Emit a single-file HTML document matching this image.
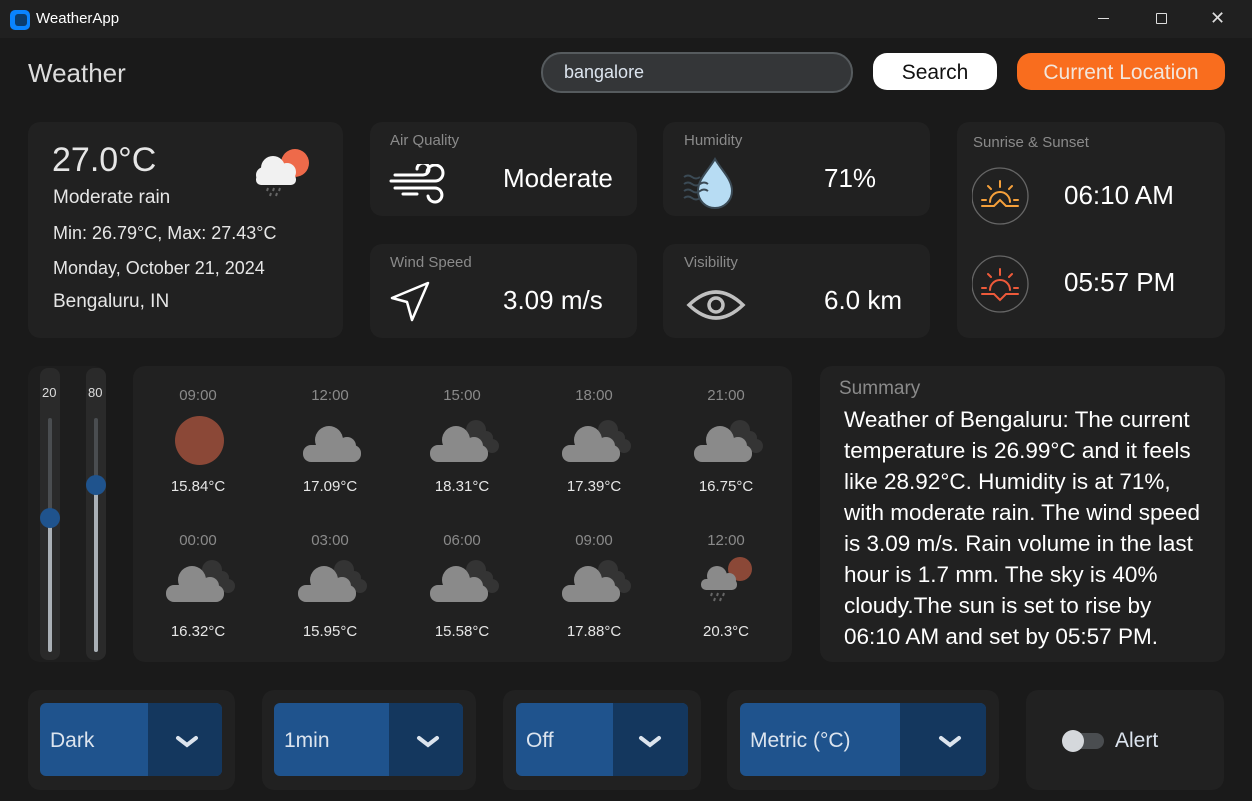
<!DOCTYPE html>
<html><head><meta charset="utf-8"><style>
*{margin:0;padding:0;box-sizing:border-box}
body{width:1252px;height:801px;background:#1a1a1a;font-family:"Liberation Sans",sans-serif;color:#e6e6e6;position:relative;overflow:hidden}
.a{position:absolute}
.card{position:absolute;background:#212121;border-radius:12px}
.lbl{position:absolute;color:#8a8a8a;font-size:15px}
.val{position:absolute;color:#fff;font-size:26px}
.ft{position:absolute;width:100px;text-align:center;font-size:15px}
.t{color:#8a8a8a}
.dd{position:absolute;top:703px;height:73px;background:#1f538d;border-radius:6px;overflow:hidden}
.dd span{position:absolute;left:10px;top:26px;font-size:21px;color:#dce4ee}
.dd i{position:absolute;top:0;right:0;bottom:0;background:#14375e}
.dd svg{position:absolute;top:31px}
</style></head><body>
<svg width="0" height="0" style="position:absolute"><defs>
<g id="c"><circle cx="28" cy="20" r="14" fill="#8a8a8a"/><circle cx="46" cy="26" r="9" fill="#8a8a8a"/><rect x="2" y="25" width="58" height="17" rx="8" fill="#8a8a8a"/></g>
<g id="c2"><circle cx="48" cy="12" r="10" fill="#343434"/><circle cx="58" cy="20" r="7" fill="#343434"/><circle cx="64" cy="28" r="7" fill="#343434"/><rect x="44" y="18" width="20" height="16" fill="#343434"/><circle cx="28" cy="22" r="14" fill="#8a8a8a"/><circle cx="46" cy="28" r="9" fill="#8a8a8a"/><rect x="2" y="27" width="58" height="17" rx="8" fill="#8a8a8a"/></g>
</defs></svg>
<div class="a" style="left:0;top:0;width:1252px;height:38px;background:#202020"></div>
<div class="a" style="left:10px;top:10px;width:20px;height:20px;border-radius:5px;background:#0a84ff"></div>
<div class="a" style="left:15px;top:14px;width:12px;height:12px;border-radius:3px;background:#0b3d6e"></div>
<div class="a" style="left:36px;top:10px;font-size:15px;color:#fff">WeatherApp</div>
<div class="a" style="left:1098px;top:18px;width:11px;height:1px;background:#ddd"></div>
<div class="a" style="left:1156px;top:13px;width:11px;height:11px;border:1px solid #ddd;border-radius:1px"></div>
<div class="a" style="left:1210px;top:8px;font-size:18px;color:#ddd">✕</div>

<div class="a" style="left:28px;top:58px;font-size:26px;color:#dcdcdc">Weather</div>
<div class="a" style="left:541px;top:52px;width:312px;height:41px;border:2px solid #565b5e;background:#343638;border-radius:20px"></div>
<div class="a" style="left:564px;top:62px;font-size:18px;color:#dce4ee">bangalore</div>
<div class="a" style="left:873px;top:53px;width:124px;height:37px;background:#fff;border-radius:14px;color:#111;font-size:21px;text-align:center;line-height:39px">Search</div>
<div class="a" style="left:1017px;top:53px;width:208px;height:37px;background:#f96d1e;border-radius:14px;color:#f2e6dc;font-size:21px;text-align:center;line-height:39px">Current Location</div>

<div class="card" style="left:28px;top:122px;width:315px;height:216px"></div>
<div class="a" style="left:52px;top:141px;font-size:34px;color:#e6e6e6">27.0°C</div>
<div class="a" style="left:53px;top:187px;font-size:19px">Moderate rain</div>
<div class="a" style="left:53px;top:223px;font-size:18px">Min: 26.79°C, Max: 27.43°C</div>
<div class="a" style="left:53px;top:258px;font-size:18px">Monday, October 21, 2024</div>
<div class="a" style="left:53px;top:291px;font-size:19px">Bengaluru, IN</div>
<svg class="a" style="left:252px;top:146px" width="60" height="52"><circle cx="43" cy="17" r="14" fill="#ee6a4a"/><circle cx="21" cy="22" r="12" fill="#f1f1f1"/><circle cx="35" cy="26" r="9" fill="#f1f1f1"/><circle cx="12" cy="29" r="8" fill="#f1f1f1"/><rect x="4" y="28" width="40" height="11" rx="5" fill="#f1f1f1"/><g stroke="#666" stroke-width="2"><path d="M16 42l-1 3M22 42l-1 3M28 42l-1 3M19 47l-1 3M25 47l-1 3"/></g></svg>

<div class="card" style="left:370px;top:122px;width:267px;height:94px"></div>
<div class="lbl" style="left:390px;top:132px">Air Quality</div>
<svg class="a" style="left:389px;top:164px" width="66" height="40" fill="none" stroke="#fff" stroke-width="3" stroke-linecap="round"><path d="M6 11h28a6 6 0 1 0-6-6M2 17h44a8 8 0 1 0-8-8M6 24h40a7 7 0 1 1-7 8M14 30h14"/></svg>
<div class="val" style="left:503px;top:163px">Moderate</div>

<div class="card" style="left:370px;top:244px;width:267px;height:94px"></div>
<div class="lbl" style="left:390px;top:254px">Wind Speed</div>
<svg class="a" style="left:390px;top:281px" width="40" height="42" fill="none" stroke="#fff" stroke-width="2.5" stroke-linejoin="round"><path d="M38 2L2 17l15 4l5 18z"/></svg>
<div class="val" style="left:503px;top:285px">3.09 m/s</div>

<div class="card" style="left:663px;top:122px;width:267px;height:94px"></div>
<div class="lbl" style="left:684px;top:132px">Humidity</div>
<svg class="a" style="left:682px;top:157px" width="54" height="52"><path d="M33 2C26 14 16 22 16 34a17 17 0 0 0 34 0C50 22 40 14 33 2z" fill="#b7dcf3" stroke="#3b4a55" stroke-width="2"/><g fill="none" stroke="#3b4a55" stroke-width="2"><path d="M2 20q4-3 8 0t8 0M2 27q4-3 8 0t8 0t8 0M2 34q4-3 8 0t8 0t8 0M2 41q4-3 8 0t8 0"/></g></svg>
<div class="val" style="left:824px;top:163px">71%</div>

<div class="card" style="left:663px;top:244px;width:267px;height:94px"></div>
<div class="lbl" style="left:684px;top:254px">Visibility</div>
<svg class="a" style="left:686px;top:285px" width="60" height="40" fill="none" stroke="#c0c0c0" stroke-width="3.5"><path d="M3 20Q30-6 57 20Q30 46 3 20z"/><circle cx="30" cy="20" r="7"/></svg>
<div class="val" style="left:824px;top:285px">6.0 km</div>

<div class="card" style="left:957px;top:122px;width:268px;height:216px"></div>
<div class="lbl" style="left:973px;top:134px">Sunrise &amp; Sunset</div>
<svg class="a" style="left:972px;top:164px" width="60" height="150" fill="none" stroke-width="2" stroke-linecap="round"><circle cx="28" cy="32" r="28" stroke="#666" stroke-width="1.3"/><circle cx="28" cy="120" r="28" stroke="#666" stroke-width="1.3"/><g stroke="#f5a03b"><path d="M18 38a10 10 0 0 1 20 0M28 17v6M16 22l3 3M40 22l-3 3M10 36h4M42 36h4M10 42h12l6-6l6 6h12"/></g><g stroke="#ee5a3a"><path d="M18 126a10 10 0 0 1 20 0M28 105v6M16 110l3 3M40 110l-3 3M10 124h4M42 124h4M10 130h12l6 6l6-6h12"/></g></svg>
<div class="val" style="left:1064px;top:180px">06:10 AM</div>
<div class="val" style="left:1064px;top:267px">05:57 PM</div>

<div class="card" style="left:28px;top:366px;width:78px;height:296px;background:#1e1e1e"></div>
<div class="a" style="left:40px;top:368px;width:20px;height:292px;background:#2a2a2a;border-radius:8px"></div>
<div class="a" style="left:86px;top:368px;width:20px;height:292px;background:#2a2a2a;border-radius:8px"></div>
<div class="a" style="left:42px;top:385px;font-size:13px;color:#ddd">20</div>
<div class="a" style="left:88px;top:385px;font-size:13px;color:#ddd">80</div>
<div class="a" style="left:48px;top:418px;width:4px;height:234px;background:#4a4d50;border-radius:2px"></div>
<div class="a" style="left:48px;top:518px;width:4px;height:134px;background:#aab0b6;border-radius:2px"></div>
<div class="a" style="left:94px;top:418px;width:4px;height:234px;background:#4a4d50;border-radius:2px"></div>
<div class="a" style="left:94px;top:485px;width:4px;height:167px;background:#aab0b6;border-radius:2px"></div>
<div class="a" style="left:40px;top:508px;width:20px;height:20px;border-radius:50%;background:#1f538d"></div>
<div class="a" style="left:86px;top:475px;width:20px;height:20px;border-radius:50%;background:#1f538d"></div>

<div class="card" style="left:133px;top:366px;width:659px;height:296px"></div>
<div class="ft t" style="left:148px;top:387px">09:00</div>
<div class="ft t" style="left:280px;top:387px">12:00</div>
<div class="ft t" style="left:412px;top:387px">15:00</div>
<div class="ft t" style="left:544px;top:387px">18:00</div>
<div class="ft t" style="left:676px;top:387px">21:00</div>
<div class="a" style="left:175px;top:416px;width:49px;height:49px;border-radius:50%;background:#8b4837"></div>
<svg class="a" style="left:301px;top:420px" width="62" height="44"><use href="#c"/></svg>
<svg class="a" style="left:428px;top:418px" width="72" height="46"><use href="#c2"/></svg>
<svg class="a" style="left:560px;top:418px" width="72" height="46"><use href="#c2"/></svg>
<svg class="a" style="left:692px;top:418px" width="72" height="46"><use href="#c2"/></svg>
<div class="ft" style="left:148px;top:478px">15.84°C</div>
<div class="ft" style="left:280px;top:478px">17.09°C</div>
<div class="ft" style="left:412px;top:478px">18.31°C</div>
<div class="ft" style="left:544px;top:478px">17.39°C</div>
<div class="ft" style="left:676px;top:478px">16.75°C</div>
<div class="ft t" style="left:148px;top:532px">00:00</div>
<div class="ft t" style="left:280px;top:532px">03:00</div>
<div class="ft t" style="left:412px;top:532px">06:00</div>
<div class="ft t" style="left:544px;top:532px">09:00</div>
<div class="ft t" style="left:676px;top:532px">12:00</div>
<svg class="a" style="left:164px;top:558px" width="72" height="46"><use href="#c2"/></svg>
<svg class="a" style="left:296px;top:558px" width="72" height="46"><use href="#c2"/></svg>
<svg class="a" style="left:428px;top:558px" width="72" height="46"><use href="#c2"/></svg>
<svg class="a" style="left:560px;top:558px" width="72" height="46"><use href="#c2"/></svg>
<svg class="a" style="left:698px;top:554px" width="60" height="52"><circle cx="42" cy="15" r="12" fill="#8b4837"/><circle cx="19" cy="22" r="10" fill="#8a8a8a"/><circle cx="31" cy="26" r="7" fill="#8a8a8a"/><rect x="3" y="25" width="36" height="11" rx="5" fill="#8a8a8a"/><g stroke="#666" stroke-width="2"><path d="M14 39l-1 3M20 39l-1 3M26 39l-1 3M17 44l-1 3M23 44l-1 3"/></g></svg>
<div class="ft" style="left:148px;top:623px">16.32°C</div>
<div class="ft" style="left:280px;top:623px">15.95°C</div>
<div class="ft" style="left:412px;top:623px">15.58°C</div>
<div class="ft" style="left:544px;top:623px">17.88°C</div>
<div class="ft" style="left:676px;top:623px">20.3°C</div>

<div class="card" style="left:820px;top:366px;width:405px;height:296px"></div>
<div class="a" style="left:839px;top:378px;font-size:19px;color:#8a8a8a">Summary</div>
<div class="a" style="left:844px;top:404px;font-size:22.5px;line-height:31px;color:#fff;white-space:nowrap">Weather of Bengaluru: The current<br>temperature is 26.99°C and it feels<br>like 28.92°C. Humidity is at 71%,<br>with moderate rain. The wind speed<br>is 3.09 m/s. Rain volume in the last<br>hour is 1.7 mm. The sky is 40%<br>cloudy.The sun is set to rise by<br>06:10 AM and set by 05:57 PM.</div>

<div class="card" style="left:28px;top:690px;width:207px;height:100px"></div>
<div class="card" style="left:262px;top:690px;width:214px;height:100px"></div>
<div class="card" style="left:503px;top:690px;width:198px;height:100px"></div>
<div class="card" style="left:727px;top:690px;width:272px;height:100px"></div>
<div class="card" style="left:1026px;top:690px;width:198px;height:100px"></div>
<div class="dd" style="left:40px;width:182px"><span>Dark</span><i style="width:74px"></i><svg style="left:134px" width="26" height="16"><path d="M4 4l9 7l9-7" fill="none" stroke="#dce4ee" stroke-width="4" stroke-linecap="round"/></svg></div>
<div class="dd" style="left:274px;width:189px"><span>1min</span><i style="width:74px"></i><svg style="left:141px" width="26" height="16"><path d="M4 4l9 7l9-7" fill="none" stroke="#dce4ee" stroke-width="4" stroke-linecap="round"/></svg></div>
<div class="dd" style="left:516px;width:172px"><span>Off</span><i style="width:75px"></i><svg style="left:121px" width="26" height="16"><path d="M4 4l9 7l9-7" fill="none" stroke="#dce4ee" stroke-width="4" stroke-linecap="round"/></svg></div>
<div class="dd" style="left:740px;width:246px"><span>Metric (°C)</span><i style="width:86px"></i><svg style="left:197px" width="26" height="16"><path d="M4 4l9 7l9-7" fill="none" stroke="#dce4ee" stroke-width="4" stroke-linecap="round"/></svg></div>
<div class="a" style="left:1064px;top:733px;width:40px;height:16px;border-radius:8px;background:#4a4d50"></div>
<div class="a" style="left:1062px;top:730px;width:22px;height:22px;border-radius:50%;background:#d5d8dc"></div>
<div class="a" style="left:1115px;top:729px;font-size:21px;color:#dce4ee">Alert</div>
</body></html>
